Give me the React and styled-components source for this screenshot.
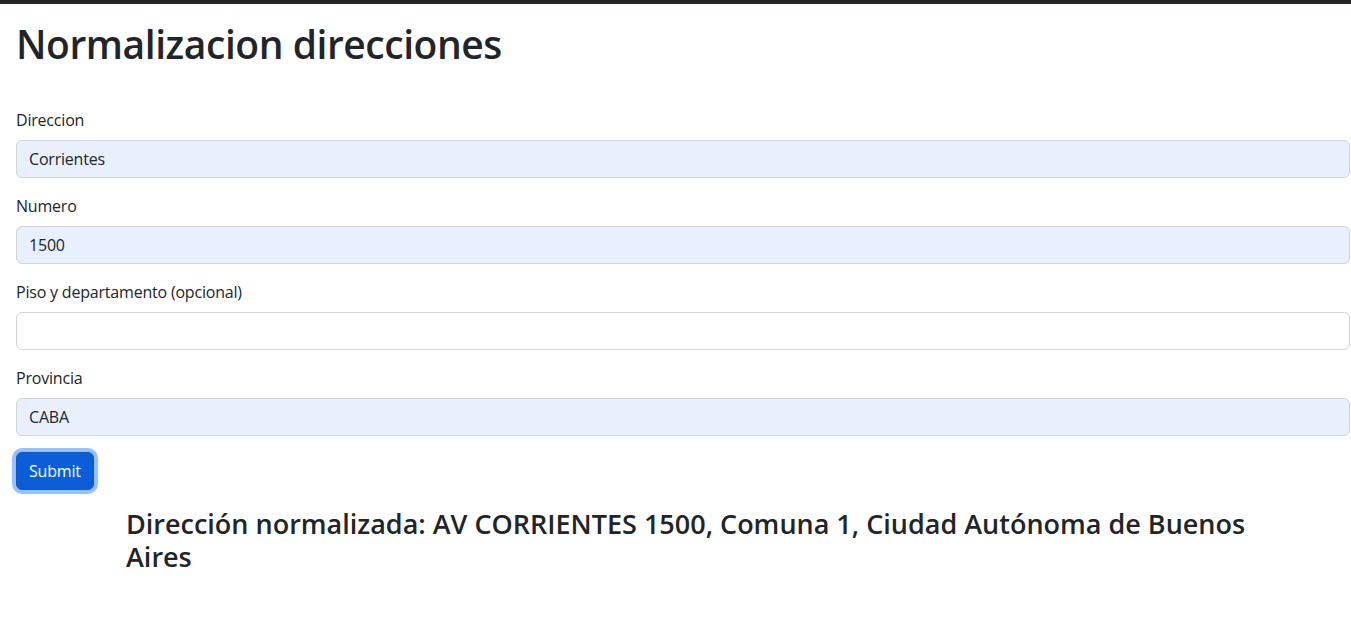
import React, { useState } from "react";
import styled, { createGlobalStyle } from "styled-components";

const GlobalStyle = createGlobalStyle`
  body {
    margin: 0;
    background: #fff;
    color: #212529;
    font-family: "Open Sans", "Liberation Sans", sans-serif;
  }
`;

const TopBar = styled.div`
  height: 4px;
  background-color: #212529;
`;

const Page = styled.div`
  padding: 0 1px 0 16px;
`;

const Title = styled.h1`
  margin: 16px 0 40px;
  font-size: 39px;
  font-weight: 600;
  line-height: 48px;
  letter-spacing: -0.45px;
  color: #212529;
`;

const Field = styled.div`
  margin-bottom: 16px;
`;

const Label = styled.label`
  display: block;
  margin-bottom: 8px;
  font-size: 16px;
  line-height: 24px;
  letter-spacing: -0.2px;
`;

const Input = styled.input`
  display: block;
  box-sizing: border-box;
  width: 100%;
  height: 38px;
  padding: 6px 12px;
  font-family: inherit;
  font-size: 16px;
  letter-spacing: -0.2px;
  color: #212529;
  background-color: ${(p) => (p.$filled ? "#e8f0fe" : "#fff")};
  border: 1px solid #ced4da;
  border-radius: 6px;
  outline: none;
`;

const Button = styled.button`
  height: 38px;
  padding: 0 12px;
  font-family: inherit;
  font-size: 16px;
  letter-spacing: -0.2px;
  color: #fff;
  background-color: #0b5ed7;
  border: 1px solid #0a58ca;
  border-radius: 6px;
  box-shadow: 0 0 0 4px #98c1fe;
  cursor: pointer;
`;

const Result = styled.h3`
  width: 1150px;
  margin: 17px 0 0 110px;
  font-size: 27px;
  font-weight: 600;
  line-height: 33px;
  color: #212529;
`;

const App = () => {
  const [direccion, setDireccion] = useState("Corrientes");
  const [numero, setNumero] = useState("1500");
  const [piso, setPiso] = useState("");
  const [provincia, setProvincia] = useState("CABA");

  const handleSubmit = (e) => {
    e.preventDefault();
  };

  return (
    <>
      <GlobalStyle />
      <TopBar />
      <Page>
        <Title>Normalizacion direcciones</Title>
        <form onSubmit={handleSubmit}>
          <Field>
            <Label>Direccion</Label>
            <Input
              $filled
              value={direccion}
              onChange={(e) => setDireccion(e.target.value)}
            />
          </Field>
          <Field>
            <Label>Numero</Label>
            <Input
              $filled
              value={numero}
              onChange={(e) => setNumero(e.target.value)}
            />
          </Field>
          <Field>
            <Label>Piso y departamento (opcional)</Label>
            <Input value={piso} onChange={(e) => setPiso(e.target.value)} />
          </Field>
          <Field>
            <Label>Provincia</Label>
            <Input
              $filled
              value={provincia}
              onChange={(e) => setProvincia(e.target.value)}
            />
          </Field>
          <Button type="submit">Submit</Button>
        </form>
        <Result>
          Dirección normalizada: AV CORRIENTES 1500, Comuna 1, Ciudad Autónoma
          de Buenos Aires
        </Result>
      </Page>
    </>
  );
};

export default App;
